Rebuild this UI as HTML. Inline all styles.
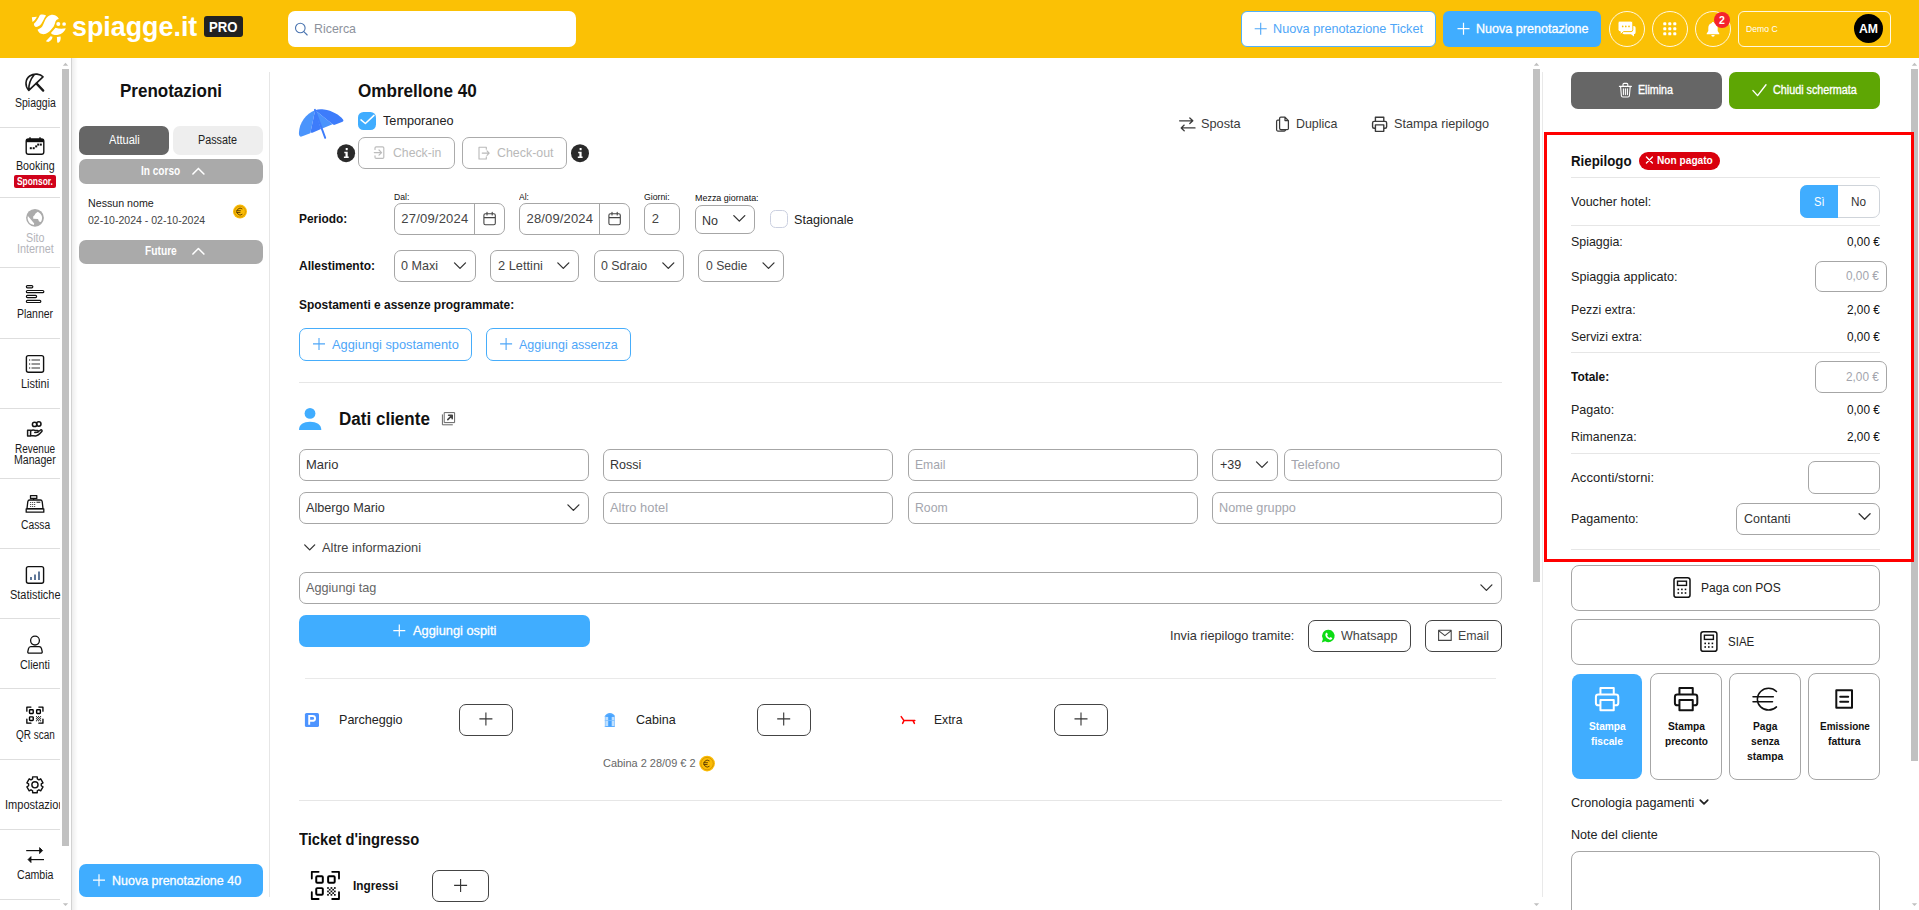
<!DOCTYPE html>
<html><head><meta charset="utf-8">
<style>
*{box-sizing:border-box;margin:0;padding:0}
html,body{width:1919px;height:910px;overflow:hidden;background:#fff}
body{font-family:"Liberation Sans",sans-serif;font-size:13px;color:#222;position:relative}
.a{position:absolute}
.t{position:absolute;white-space:pre;line-height:1}
svg{position:absolute;overflow:visible}
</style></head><body>
<div class="a" style="left:0px;top:0px;width:1919px;height:58px;background:#fbc105;border-radius:0px;"></div>
<svg style="left:0;top:0" width="110" height="58" viewBox="0 0 110 58"><g fill="#fff">
<path d="M31.8 17.2 L36.9 16.8 C35.8 19 34.3 20.8 32.5 21.9 Z"/>
<path d="M39.9 15 C41.8 14.3 44 14.5 46.1 15.4 C44 18 43.3 21 41.2 23.9 C39.8 25.6 38 26.7 35.9 26.9 C34.6 26.5 33.8 25.2 33.9 23.7 C36.5 21.5 38.3 18.5 39.9 15 Z"/>
<path d="M50.9 14.9 C52.5 14.5 54.2 14.8 55.5 15.6 C57.2 16.5 58.3 17.7 58.8 19.1 C57.3 19.4 56.1 20.2 55.5 21.4 C55 23.2 54.6 24.8 53.7 26.5 L50 31.1 C48.8 32.3 47.4 33.3 45.85 33.85 C44.3 34.3 42.6 34.3 41.2 33.85 C39.5 33 38.2 31.5 37.5 29.7 C39.5 29 41.1 27.9 42.2 26.5 C43.6 24.3 44.3 21.8 45.4 19.5 C46.1 18.2 47 17.1 48.2 16.3 C49 15.7 49.9 15.2 50.9 14.9 Z"/>
<path d="M55.5 27.85 C58.8 28.9 62.3 29 65.7 28.3 C65.3 30 64.3 31.4 62.9 32.5 C61.6 33.6 60 34.4 58.3 34.8 C56.8 35.1 55.2 35.1 53.7 34.8 C52.6 34.4 51.6 33.8 50.9 32.9 Z"/>
<circle cx="58.3" cy="23.9" r="2.0"/><circle cx="64.1" cy="24" r="1.85"/>
<path d="M50.5 36.2 L52.5 36.85 C52.4 38.2 51.8 39.4 50.9 40.3 C50.1 41.1 49.2 41.7 48.2 41.9 L45.85 41.2 Z"/>
<path d="M56.9 37.1 L60.6 36.6 C60.8 38 60.7 39.5 60.2 40.8 C59.8 41.7 59.1 42.4 58.3 42.85 L57.2 42.6 Z"/>
</g></svg>
<div class="t" style="left:72.0px;top:12.37px;font-size:28.5px;font-weight:bold;color:#fff;transform:scaleX(0.9419);transform-origin:0 0;">spiagge.it</div>
<div class="a" style="left:204px;top:16px;width:39px;height:21px;background:#222;border-radius:3px;"></div>
<div class="t" style="left:209.0px;top:19.95px;font-size:14px;font-weight:bold;color:#fff;transform:scaleX(0.9359);transform-origin:0 0;">PRO</div>
<div class="a" style="left:288px;top:11px;width:288px;height:36px;background:#fff;border-radius:7px;"></div>
<svg style="left:0;top:0" width="1" height="1"><circle cx="300.3" cy="28" r="4.8" fill="none" stroke="#4a74b0" stroke-width="1.1"/><path d="M303.8 31.6 L307.2 35" stroke="#4a74b0" stroke-width="1.1" stroke-linecap="round"/></svg>
<div class="t" style="left:314.0px;top:22.00px;font-size:13px;color:#8d929c;transform:scaleX(0.9529);transform-origin:0 0;">Ricerca</div>
<div class="a" style="left:1241px;top:11px;width:195px;height:36px;border:1px solid #52b2fb;border-radius:6px;background:#fff;"></div>
<svg style="left:0;top:0" width="1" height="1"><path d="M1260.7 22.7V34.7M1254.7 28.7H1266.7" fill="none" stroke="#4ea6f8" stroke-width="1.1"/></svg>
<div class="t" style="left:1273.0px;top:22.20px;font-size:13px;color:#4ea6f8;transform:scaleX(0.9744);transform-origin:0 0;">Nuova prenotazione Ticket</div>
<div class="a" style="left:1443px;top:11px;width:158px;height:36px;background:#40adff;border-radius:6px;"></div>
<svg style="left:0;top:0" width="1" height="1"><path d="M1463.5 22.7V34.7M1457.5 28.7H1469.5" fill="none" stroke="#fff" stroke-width="1.2"/></svg>
<div class="t" style="left:1476.0px;top:22.20px;font-size:13px;color:#fff;transform:scaleX(0.9668);transform-origin:0 0;-webkit-text-stroke:0.3px #fff;">Nuova prenotazione</div>
<div class="a" style="left:1609px;top:11px;width:36px;height:36px;border:1px solid rgba(255,255,255,0.88);border-radius:50%"></div>
<div class="a" style="left:1651.8px;top:11px;width:36px;height:36px;border:1px solid rgba(255,255,255,0.88);border-radius:50%"></div>
<div class="a" style="left:1694.8px;top:11px;width:36px;height:36px;border:1px solid rgba(255,255,255,0.88);border-radius:50%"></div>
<svg style="left:0;top:0" width="1" height="1"><g><path fill="#fff" d="M1624 26 H1633.8 a1.8 1.8 0 0 1 1.8 1.8 V32.4 a1.8 1.8 0 0 1 -1.8 1.8 H1634 V36.600 L1631 34.200 H1624 a1.800 1.800 0 0 1 -1.800 -1.800 V27.800 a1.800 1.800 0 0 1 1.800 -1.800 Z"/><path fill="#fff" stroke="#fbc105" stroke-width="1" d="M1619.8 21.1 H1631 a1.8 1.8 0 0 1 1.8 1.8 V29.800 a1.800 1.800 0 0 1 -1.800 1.800 H1623.600 L1620.200 34.800 V31.600 H1619.800 a1.800 1.800 0 0 1 -1.800 -1.800 V22.900 a1.800 1.800 0 0 1 1.800 -1.800 Z"/><circle cx="1622.7" cy="26.4" r="0.85" fill="#fbc105"/><circle cx="1625.8" cy="26.4" r="0.85" fill="#fbc105"/><circle cx="1629" cy="26.4" r="0.85" fill="#fbc105"/></g></svg>
<svg style="left:0;top:0" width="1" height="1"><rect x="1663.3" y="22.3" width="3" height="3" rx="0.9" fill="#fff"/><rect x="1663.3" y="27.3" width="3" height="3" rx="0.9" fill="#fff"/><rect x="1663.3" y="32.3" width="3" height="3" rx="0.9" fill="#fff"/><rect x="1668.3" y="22.3" width="3" height="3" rx="0.9" fill="#fff"/><rect x="1668.3" y="27.3" width="3" height="3" rx="0.9" fill="#fff"/><rect x="1668.3" y="32.3" width="3" height="3" rx="0.9" fill="#fff"/><rect x="1673.3" y="22.3" width="3" height="3" rx="0.9" fill="#fff"/><rect x="1673.3" y="27.3" width="3" height="3" rx="0.9" fill="#fff"/><rect x="1673.3" y="32.3" width="3" height="3" rx="0.9" fill="#fff"/></svg>
<svg style="left:0;top:0" width="1" height="1"><g transform="translate(1706,21.5)"><path fill="#fff" d="M7 0.5 C7.7 0.5 8.2 1 8.2 1.6 C10.5 2.2 11.7 4.2 11.7 6.5 V9.5 L13.3 12 V12.8 H0.7 V12 L2.3 9.5 V6.5 C2.3 4.2 3.5 2.2 5.8 1.6 C5.8 1 6.3 0.5 7 0.5 Z M5.3 13.6 H8.7 A1.7 1.7 0 0 1 5.3 13.6 Z"/></g></svg>
<div class="a" style="left:1714px;top:12px;width:16px;height:16px;background:#f5222d;border-radius:9px;"></div>
<div class="t" style="left:1719.0px;top:14.71px;font-size:10.5px;font-weight:bold;color:#fff;">2</div>
<div class="a" style="left:1738px;top:11px;width:153px;height:36px;border:1px solid rgba(255,255,255,0.88);border-radius:6px;background:transparent;"></div>
<div class="t" style="left:1746.4px;top:24.36px;font-size:9.5px;color:#fff;transform:scaleX(0.9069);transform-origin:0 0;">Demo C</div>
<div class="a" style="left:1854px;top:14px;width:29px;height:29px;background:#000;border-radius:15px;"></div>
<div class="t" style="left:1859.2px;top:22.62px;font-size:12.5px;font-weight:bold;color:#fff;transform:scaleX(0.9767);transform-origin:0 0;">AM</div>
<div class="a" style="left:0px;top:127px;width:60px;height:1px;background:#dedede;border-radius:0px;"></div>
<div class="a" style="left:0px;top:197px;width:60px;height:1px;background:#dedede;border-radius:0px;"></div>
<div class="a" style="left:0px;top:267px;width:60px;height:1px;background:#dedede;border-radius:0px;"></div>
<div class="a" style="left:0px;top:338px;width:60px;height:1px;background:#dedede;border-radius:0px;"></div>
<div class="a" style="left:0px;top:408px;width:60px;height:1px;background:#dedede;border-radius:0px;"></div>
<div class="a" style="left:0px;top:478px;width:60px;height:1px;background:#dedede;border-radius:0px;"></div>
<div class="a" style="left:0px;top:548px;width:60px;height:1px;background:#dedede;border-radius:0px;"></div>
<div class="a" style="left:0px;top:618px;width:60px;height:1px;background:#dedede;border-radius:0px;"></div>
<div class="a" style="left:0px;top:688px;width:60px;height:1px;background:#dedede;border-radius:0px;"></div>
<div class="a" style="left:0px;top:759px;width:60px;height:1px;background:#dedede;border-radius:0px;"></div>
<div class="a" style="left:0px;top:829px;width:60px;height:1px;background:#dedede;border-radius:0px;"></div>
<div class="a" style="left:0px;top:899px;width:60px;height:1px;background:#dedede;border-radius:0px;"></div>
<div class="a" style="left:62px;top:69px;width:7px;height:777px;background:#c1c1c1;border-radius:0px;"></div>
<svg style="left:0;top:0" width="1" height="1"><path d="M62.8 65.8 L65.5 62.8 L68.2 65.8 Z" fill="#c0c0c0"/><path d="M62.8 903.3 L65.5 906 L68.2 903.3 Z" fill="#c0c0c0"/></svg>
<div class="a" style="left:70.5px;top:58px;width:1.0px;height:852px;background:#d2d2d2;border-radius:0px;"></div>
<div class="a" style="left:71.5px;top:58px;width:6px;height:852px;background:linear-gradient(to right,rgba(0,0,0,0.07),rgba(0,0,0,0))"></div>
<svg style="left:0;top:0" width="1" height="1"><path d="M28.8 90.4 C24.8 86.3 25 79.2 29.7 76 C34.2 73 40.3 73.8 43 76.8 Z M28.8 90.4 C28.5 85 30.5 79.2 34.2 74.8" fill="none" stroke="#1a1a1a" stroke-width="1.6" stroke-linecap="round" stroke-linejoin="round" /></svg>
<svg style="left:0;top:0" width="1" height="1"><path d="M36.6 83.6 L43.2 90.6" fill="none" stroke="#1a1a1a" stroke-width="2.3" stroke-linecap="round" stroke-linejoin="round" stroke-linecap="butt"/></svg>
<div class="t" style="left:14.8px;top:97.24px;font-size:12px;color:#1a1a1a;transform:scaleX(0.8733);transform-origin:0 0;">Spiaggia</div>
<svg style="left:0;top:0" width="1" height="1"><rect x="26.2" y="139" width="17.6" height="15.3" rx="2.2" fill="none" stroke="#111" stroke-width="1.4"/><rect x="26.2" y="139" width="17.6" height="3.2" fill="#111"/><path d="M30 137.3V139.5M40 137.3V139.5" stroke="#111" stroke-width="1.4"/><g fill="#111"><rect x="29.8" y="147.2" width="2" height="2"/><rect x="32.7" y="147.2" width="2" height="2"/><rect x="35.2" y="145.4" width="2" height="2"/><rect x="37.2" y="143.600" width="2" height="2"/><rect x="39.800" y="143.600" width="2" height="2"/></g></svg>
<div class="t" style="left:15.9px;top:159.64px;font-size:12px;color:#1a1a1a;transform:scaleX(0.8899);transform-origin:0 0;">Booking</div>
<div class="a" style="left:14px;top:175px;width:42px;height:13px;background:#d0021b;border-radius:2px;"></div>
<div class="t" style="left:17.3px;top:175.91px;font-size:10.5px;font-weight:bold;color:#fff;transform:scaleX(0.8000);transform-origin:0 0;">Sponsor.</div>
<svg style="left:0;top:0" width="1" height="1"><circle cx="35" cy="217.8" r="8.9" fill="#ababab"/><path d="M27.9 215.9 L30.9 219.5 L34.2 223.4 L33.85 224.9 C32.800 224.900 31.800 224.600 30.900 224.100 C29.900 223.500 29.100 222.600 28.600 221.500 C28.100 220.600 27.800 219.600 27.600 218.500 C27.600 217.600 27.700 216.700 27.900 215.900 Z" fill="#fff"/><path d="M37.800 211.700 L35.500 213.550 L34.500 215.200 L33.200 216.500 V218.800 L38 219 L39 221.600 L40.900 222 C41.700 220.800 42.100 219.400 42.100 217.800 C42.100 216.400 41.500 215 40.400 213.700 C39.700 212.900 38.800 212.200 37.800 211.700 Z" fill="#fff"/></svg>
<div class="t" style="left:25.9px;top:232.14px;font-size:12px;color:#b4b4ba;transform:scaleX(0.8943);transform-origin:0 0;">Sito</div>
<div class="t" style="left:16.7px;top:242.64px;font-size:12px;color:#b4b4ba;transform:scaleX(0.9041);transform-origin:0 0;">Internet</div>
<svg style="left:0;top:0" width="1" height="1"><g fill="none" stroke="#111" stroke-width="1.2"><rect x="26.4" y="285.6" width="6.4" height="2.2" rx="1"/><rect x="26.4" y="290.5" width="17.4" height="2.2" rx="1"/><rect x="26.4" y="295.4" width="10.2" height="2.2" rx="1"/><rect x="26.4" y="300.3" width="14.4" height="2.2" rx="1"/></g></svg>
<div class="t" style="left:17.2px;top:307.54px;font-size:12px;color:#1a1a1a;transform:scaleX(0.8701);transform-origin:0 0;">Planner</div>
<svg style="left:0;top:0" width="1" height="1"><rect x="26.4" y="355.6" width="17.2" height="16.6" rx="2" fill="none" stroke="#111" stroke-width="1.4"/><path d="M31.5 360H40M31.5 364H40M31.5 368H40" stroke="#333" stroke-width="1.1"/><g fill="#333"><rect x="29" y="359.4" width="1.2" height="1.2"/><rect x="29" y="363.4" width="1.2" height="1.2"/><rect x="29" y="367.4" width="1.2" height="1.2"/></g></svg>
<div class="t" style="left:21.2px;top:377.54px;font-size:12px;color:#1a1a1a;transform:scaleX(0.9157);transform-origin:0 0;">Listini</div>
<svg style="left:0;top:0" width="1" height="1"><path d="M27.6 430.2 H30.6 V436 H27.6 Z M30.6 431 C32 429.8 34 429.8 35.4 430.6 L37.6 430.6 C38.6 430.6 38.8 432.2 37.6 432.3 L34.8 432.4 M37.9 431.8 L40.6 430 C41.6 429.4 42.6 430.6 41.8 431.5 C40.2 433.4 38 435.8 35.6 435.9 L30.6 435.4" fill="none" stroke="#1a1a1a" stroke-width="1.5" stroke-linecap="round" stroke-linejoin="round" /></svg>
<svg style="left:0;top:0" width="1" height="1"><circle cx="34.6" cy="424.4" r="2.2" fill="none" stroke="#111" stroke-width="1.5"/><circle cx="38.8" cy="424" r="2.2" fill="none" stroke="#111" stroke-width="1.5"/></svg>
<div class="t" style="left:15.1px;top:443.34px;font-size:12px;color:#1a1a1a;transform:scaleX(0.8325);transform-origin:0 0;">Revenue</div>
<div class="t" style="left:14.4px;top:454.24px;font-size:12px;color:#1a1a1a;transform:scaleX(0.8823);transform-origin:0 0;">Manager</div>
<svg style="left:0;top:0" width="1" height="1"><g fill="none" stroke="#111" stroke-width="1.3" stroke-linejoin="round"><path d="M30.5 495.6 H36.8 V498.4 H30.5 Z"/><path d="M33.6 498.4 V500"/><path d="M29.6 500 H40.4 C41.4 500 42 500.6 42.2 501.6 L43 508.6 H27 L27.8 501.6 C28 500.6 28.6 500 29.6 500 Z"/><path d="M26.2 508.8 H43.8 V512.2 H26.2 Z"/></g><path d="M36.5 502.3H40.3" stroke="#555" stroke-width="1.4"/><g fill="#555"><rect x="30" y="502" width="1.2" height="1"/><rect x="32" y="502" width="1.2" height="1"/><rect x="34" y="502" width="1.2" height="1"/><rect x="30" y="504" width="1.2" height="1"/><rect x="32" y="504" width="1.2" height="1"/><rect x="34" y="504" width="1.2" height="1"/><rect x="30" y="506" width="1.2" height="1"/><rect x="32" y="506" width="1.2" height="1"/><rect x="34" y="506" width="1.2" height="1"/></g></svg>
<div class="t" style="left:20.9px;top:518.64px;font-size:12px;color:#1a1a1a;transform:scaleX(0.8584);transform-origin:0 0;">Cassa</div>
<svg style="left:0;top:0" width="1" height="1"><rect x="26.4" y="566.6" width="17.2" height="16.6" rx="2" fill="none" stroke="#111" stroke-width="1.4"/><path d="M31 580V577M35 580V574.5M39 580V571.5" stroke="#1d3f6e" stroke-width="1.4"/></svg>
<div class="t" style="left:9.7px;top:588.64px;font-size:12px;color:#1a1a1a;transform:scaleX(0.9122);transform-origin:0 0;">Statistiche</div>
<svg style="left:0;top:0" width="1" height="1"><circle cx="35" cy="640.6" r="4.4" fill="none" stroke="#111" stroke-width="1.3"/><path d="M30.8 646.6 H39.2 C40.4 646.6 41.2 647.4 41.5 648.6 L42.2 651.6 C42.4 652.6 41.8 653.2 41 653.2 H29 C28.2 653.2 27.6 652.6 27.800 651.6 L28.5 648.6 C28.800 647.4 29.600 646.6 30.800 646.6 Z" fill="none" stroke="#111" stroke-width="1.3"/></svg>
<div class="t" style="left:20.2px;top:658.84px;font-size:12px;color:#1a1a1a;transform:scaleX(0.8963);transform-origin:0 0;">Clienti</div>
<svg style="left:0;top:0" width="1" height="1"><path d="M26.849999999999998 711.139V707.05H30.938999999999997 M38.861 707.05H42.949999999999996V711.139 M42.949999999999996 719.0609999999999V723.15H38.861 M30.938999999999997 723.15H26.849999999999998V719.0609999999999" fill="none" stroke="#000" stroke-width="1.3" stroke-linecap="round" stroke-linejoin="round"/><rect x="29.52" y="709.73" width="3.70" height="3.70" rx="0.72" fill="none" stroke="#000" stroke-width="1.43"/><rect x="36.66" y="709.73" width="3.70" height="3.70" rx="0.72" fill="none" stroke="#000" stroke-width="1.43"/><rect x="29.52" y="716.86" width="3.70" height="3.70" rx="0.72" fill="none" stroke="#000" stroke-width="1.43"/><rect x="35.94" y="716.14" width="1.03" height="1.03" fill="#111"/><rect x="35.94" y="718.20" width="1.03" height="1.03" fill="#111"/><rect x="35.94" y="720.25" width="1.03" height="1.03" fill="#111"/><rect x="36.97" y="717.17" width="1.03" height="1.03" fill="#111"/><rect x="36.97" y="719.22" width="1.03" height="1.03" fill="#111"/><rect x="38.00" y="716.14" width="1.03" height="1.03" fill="#111"/><rect x="38.00" y="718.20" width="1.03" height="1.03" fill="#111"/><rect x="38.00" y="720.25" width="1.03" height="1.03" fill="#111"/><rect x="39.02" y="717.17" width="1.03" height="1.03" fill="#111"/><rect x="39.02" y="719.22" width="1.03" height="1.03" fill="#111"/><rect x="40.05" y="716.14" width="1.03" height="1.03" fill="#111"/><rect x="40.05" y="718.20" width="1.03" height="1.03" fill="#111"/><rect x="40.05" y="720.25" width="1.03" height="1.03" fill="#111"/></svg>
<div class="t" style="left:15.9px;top:728.64px;font-size:12px;color:#1a1a1a;transform:scaleX(0.8311);transform-origin:0 0;">QR scan</div>
<svg style="left:0;top:0" width="1" height="1"><path d="M32.63 776.83 L37.27 776.83 L37.31 778.85 L38.93 779.78 L40.69 778.81 L43.01 782.82 L41.28 783.87 L41.28 785.73 L43.01 786.78 L40.69 790.79 L38.93 789.82 L37.31 790.75 L37.27 792.77 L32.63 792.77 L32.59 790.75 L30.97 789.82 L29.21 790.79 L26.89 786.78 L28.62 785.73 L28.62 783.87 L26.89 782.82 L29.21 778.81 L30.97 779.78 L32.59 778.85 Z" fill="none" stroke="#111" stroke-width="1.4" stroke-linejoin="round"/><circle cx="34.95" cy="784.8" r="3.1" fill="none" stroke="#111" stroke-width="1.4"/></svg>
<div class="a" style="left:0;top:795px;width:60px;height:20px;overflow:hidden">
<div class="t" style="left:4.5px;top:3.84px;font-size:12px;color:#1a1a1a;transform:scaleX(0.9202);transform-origin:0 0;">Impostazioni</div>
</div>
<svg style="left:0;top:0" width="1" height="1"><path d="M26.2 850.6H41" stroke="#111" stroke-width="1.2"/><path d="M39.6 847.6 L42.6 850.6 L39.6 853.6 Z" fill="#111" stroke="#111" stroke-width="0.8" stroke-linejoin="round"/><path d="M29.5 859.6H44" stroke="#111" stroke-width="1.2"/><path d="M31 856.6 L28 859.6 L31 862.6 Z" fill="#111" stroke="#111" stroke-width="0.8" stroke-linejoin="round"/></svg>
<div class="t" style="left:17.1px;top:869.24px;font-size:12px;color:#1a1a1a;transform:scaleX(0.8825);transform-origin:0 0;">Cambia</div>
<div class="t" style="left:120.3px;top:81.56px;font-size:18px;font-weight:bold;color:#111;transform:scaleX(0.9443);transform-origin:0 0;">Prenotazioni</div>
<div class="a" style="left:79px;top:126px;width:90px;height:29px;background:#666;border-radius:7px;"></div>
<div class="t" style="left:109.0px;top:134.04px;font-size:12px;color:#fff;transform:scaleX(0.9233);transform-origin:0 0;">Attuali</div>
<div class="a" style="left:173px;top:126px;width:90px;height:29px;background:#eeeeee;border-radius:7px;"></div>
<div class="t" style="left:198.4px;top:134.04px;font-size:12px;color:#222;transform:scaleX(0.8995);transform-origin:0 0;">Passate</div>
<div class="a" style="left:79px;top:159px;width:184px;height:25px;background:#aaaaaa;border-radius:7px;"></div>
<div class="t" style="left:141.4px;top:164.64px;font-size:12px;font-weight:bold;color:#fff;transform:scaleX(0.8396);transform-origin:0 0;">In corso</div>
<svg style="left:0;top:0" width="1" height="1"><path d="M192.9 173.95 L198.4 168.45 L203.9 173.95" fill="none" stroke="#fff" stroke-width="1.6" stroke-linecap="round" stroke-linejoin="round"/></svg>
<div class="t" style="left:87.7px;top:197.69px;font-size:11px;color:#222;transform:scaleX(0.9694);transform-origin:0 0;">Nessun nome</div>
<div class="t" style="left:87.7px;top:215.49px;font-size:11px;color:#444;transform:scaleX(0.9574);transform-origin:0 0;">02-10-2024 - 02-10-2024</div>
<svg style="left:0;top:0" width="1" height="1"><circle cx="240" cy="211.6" r="7" fill="#fbbc05"/><circle cx="240" cy="211.6" r="5.4" fill="none" stroke="#c98a00" stroke-width="0.7"/><path d="M242.4 209.0 A3.4 3.4 0 1 0 242.4 214.2 M236.4 210.7H240.8 M236.4 212.5H240.4" fill="none" stroke="#5a3b00" stroke-width="0.9"/></svg>
<div class="a" style="left:79px;top:240px;width:184px;height:24px;background:#aaaaaa;border-radius:7px;"></div>
<div class="t" style="left:145.4px;top:245.04px;font-size:12px;font-weight:bold;color:#fff;transform:scaleX(0.8515);transform-origin:0 0;">Future</div>
<svg style="left:0;top:0" width="1" height="1"><path d="M192.9 254.05 L198.4 248.55 L203.9 254.05" fill="none" stroke="#fff" stroke-width="1.6" stroke-linecap="round" stroke-linejoin="round"/></svg>
<div class="a" style="left:269px;top:72px;width:1px;height:825px;background:#e6e6e6;border-radius:0px;"></div>
<div class="a" style="left:79px;top:864px;width:184px;height:33px;background:#40adff;border-radius:7px;"></div>
<svg style="left:0;top:0" width="1" height="1"><path d="M99 874.2V886.2M93.0 880.2H105.0" fill="none" stroke="#fff" stroke-width="1.2"/></svg>
<div class="t" style="left:112.4px;top:873.80px;font-size:13px;color:#fff;transform:scaleX(0.9603);transform-origin:0 0;-webkit-text-stroke:0.3px #fff;">Nuova prenotazione 40</div>
<div class="t" style="left:358.4px;top:81.56px;font-size:18px;font-weight:bold;color:#111;transform:scaleX(0.9500);transform-origin:0 0;">Ombrellone 40</div>
<svg style="left:0;top:0" width="1" height="1"><g>
<path d="M315.1 110.2 C306 113.5 299.2 122.5 298.9 133.2 C298.9 135.6 300 137 301.6 136.6 L310.3 133.2 Z" fill="#4a94fc"/>
<path d="M315.1 110.2 L310.3 133.2 C310.4 131.8 311.3 133.2 312.4 132.8 L321 129 Z" fill="#3d7cfb"/>
<path d="M315.1 110.2 L321 129 L332 124.6 C332.600 124.300 332.400 123.800 332 123.800 Z" fill="#4a94fc"/>
<path d="M315.1 110.2 C318 109.200 321 109.200 324 109.600 C332 110.700 339.500 114.800 343.200 119.800 C343.700 120.800 343.300 121.400 342.600 121.700 L334.800 124.800 C333.800 125.100 333 124.800 332 123.800 Z" fill="#3d7cfb"/>
<path d="M314.9 109.8 L325.2 137.8" stroke="#3d7cfb" stroke-width="1.9" stroke-linecap="round"/>
</g></svg>
<div class="a" style="left:358px;top:112px;width:18px;height:18px;background:#40adff;border-radius:5.5px;"></div>
<svg style="left:0;top:0" width="1" height="1"><path d="M361 119.900 L365.400 123.500 L374 115.400" fill="none" stroke="#fff" stroke-width="1.5" stroke-linecap="round" stroke-linejoin="round" /></svg>
<div class="t" style="left:382.7px;top:113.80px;font-size:13px;color:#222;transform:scaleX(0.9754);transform-origin:0 0;">Temporaneo</div>
<svg style="left:0;top:0" width="1" height="1"><circle cx="346.1" cy="153.2" r="9" fill="#2a2a2a"/><rect x="345.70000000000005" y="148.0" width="2" height="2.2" fill="#fff"/><path d="M344.3 151.79999999999998H347.70000000000005V156.6H348.70000000000005V158.1H343.90000000000003V156.6H345.5V153.29999999999998H344.3Z" fill="#fff"/></svg>
<svg style="left:0;top:0" width="1" height="1"><circle cx="580" cy="153.2" r="9" fill="#2a2a2a"/><rect x="579.6" y="148.0" width="2" height="2.2" fill="#fff"/><path d="M578.2 151.79999999999998H581.6V156.6H582.6V158.1H577.8V156.6H579.4V153.29999999999998H578.2Z" fill="#fff"/></svg>
<div class="a" style="left:358px;top:137px;width:97px;height:32px;border:1px solid #ababab;border-radius:7px;background:#fff;"></div>
<div class="a" style="left:462px;top:137px;width:105px;height:32px;border:1px solid #ababab;border-radius:7px;background:#fff;"></div>
<svg style="left:0;top:0" width="1" height="1"><path d="M375 149.4 V148 C375 147.200 375.500 146.800 376.200 146.800 H382.600 C383.400 146.800 383.800 147.300 383.800 148 V157.200 C383.800 158 383.400 158.400 382.600 158.400 H376.200 C375.500 158.400 375 158 375 157.200 V155.800 M374.300 152.600 H381.400 M379 150 L381.600 152.600 L379 155.200" fill="none" stroke="#bdbdbd" stroke-width="1.2" stroke-linecap="round" stroke-linejoin="round" /></svg>
<div class="t" style="left:393.2px;top:146.40px;font-size:13px;color:#b9b9b9;transform:scaleX(0.9416);transform-origin:0 0;">Check-in</div>
<svg style="left:0;top:0" width="1" height="1"><path d="M486.3 149.3 V147.2 H479 V159 H486.3 V156.9 M482.2 153.1 H489 M487 150.8 L489.2 153.1 L487 155.4" fill="none" stroke="#b9b9b9" stroke-width="1.1" stroke-linecap="round" stroke-linejoin="round" /></svg>
<div class="t" style="left:497.3px;top:146.40px;font-size:13px;color:#b9b9b9;transform:scaleX(0.9536);transform-origin:0 0;">Check-out</div>
<svg style="left:0;top:0" width="1" height="1"><path d="M1179.6 120.8 H1192.4 M1189.8 118 L1192.8 120.8 L1189.8 123.600 M1195 127.900 H1181.600 M1184.200 125.100 L1181.200 127.900 L1184.200 130.700" fill="none" stroke="#3a3a3a" stroke-width="1.3" stroke-linecap="round" stroke-linejoin="round" /></svg>
<div class="t" style="left:1200.6px;top:116.80px;font-size:13px;color:#3a3a3a;transform:scaleX(0.9782);transform-origin:0 0;">Sposta</div>
<svg style="left:0;top:0" width="1" height="1"><path d="M1279.6 120.2 V128.2 C1279.6 129 1280.2 129.600 1281 129.600 H1285.600 M1279.600 120.200 H1277.800 C1277 120.200 1276.600 120.800 1276.600 121.400 V129.800 C1276.600 130.600 1277.200 131 1277.800 131 H1284.400 C1285.200 131 1285.600 130.400 1285.600 129.800 V129.600 M1279.600 120.200 V118.400 C1279.600 117.800 1280.200 117.200 1280.800 117.200 H1285 L1288.400 120.600 V128.400 C1288.400 129 1287.800 129.600 1287.200 129.600 H1285.600 M1285 117.200 V120.600 H1288.400" fill="none" stroke="#3a3a3a" stroke-width="1.25" stroke-linecap="round" stroke-linejoin="round" /></svg>
<div class="t" style="left:1296.2px;top:116.80px;font-size:13px;color:#3a3a3a;transform:scaleX(0.9548);transform-origin:0 0;">Duplica</div>
<svg style="left:0;top:0" width="1" height="1"><path d="M1375.42 121.36 V117.27499999999999 H1383.78 V121.36 M1375.42 128.2 H1374.09 C1373.14 128.2 1372.57 127.63 1372.57 126.67999999999999 V122.88 C1372.57 121.92999999999999 1373.14 121.36 1374.09 121.36 H1385.11 C1386.06 121.36 1386.63 121.92999999999999 1386.63 122.88 V126.67999999999999 C1386.63 127.63 1386.06 128.2 1385.11 128.2 H1383.78 M1375.42 124.875 H1383.78 V131.335 H1375.42 Z" fill="none" stroke="#3a3a3a" stroke-width="1.4" stroke-linecap="round" stroke-linejoin="round" /></svg>
<div class="t" style="left:1393.6px;top:116.80px;font-size:13px;color:#3a3a3a;transform:scaleX(0.9748);transform-origin:0 0;">Stampa riepilogo</div>
<div class="t" style="left:298.7px;top:212.20px;font-size:13px;font-weight:bold;color:#111;transform:scaleX(0.9140);transform-origin:0 0;">Periodo:</div>
<div class="t" style="left:394.3px;top:193.18px;font-size:9px;color:#111;transform:scaleX(0.9553);transform-origin:0 0;">Dal:</div>
<div class="a" style="left:394px;top:203px;width:111px;height:32px;border:1px solid #a6a6a6;border-radius:7px;background:#fff;"></div>
<div class="a" style="left:474px;top:204px;width:1px;height:30px;background:#a6a6a6;border-radius:0px;"></div>
<div class="t" style="left:401.3px;top:212.20px;font-size:13px;color:#444;letter-spacing:0.202px;">27/09/2024</div>
<svg style="left:0;top:0" width="1" height="1"><path d="M485.40000000000003 213.8 H493.8 C494.7 213.8 495.3 214.4 495.3 215.3 V223.2 C495.3 224.1 494.7 224.7 493.8 224.7 H485.40000000000003 C484.5 224.7 483.90000000000003 224.1 483.90000000000003 223.2 V215.3 C483.90000000000003 214.4 484.5 213.8 485.40000000000003 213.8 Z M483.90000000000003 217.6 H495.3 M487.0 212.2 V215 M492.2 212.2 V215" fill="none" stroke="#444" stroke-width="1.1" stroke-linecap="round" stroke-linejoin="round" /></svg>
<div class="t" style="left:519.2px;top:193.18px;font-size:9px;color:#111;transform:scaleX(0.9510);transform-origin:0 0;">Al:</div>
<div class="a" style="left:519px;top:203px;width:111px;height:32px;border:1px solid #a6a6a6;border-radius:7px;background:#fff;"></div>
<div class="a" style="left:599px;top:204px;width:1px;height:30px;background:#a6a6a6;border-radius:0px;"></div>
<div class="t" style="left:526.6px;top:212.20px;font-size:13px;color:#444;letter-spacing:0.147px;">28/09/2024</div>
<svg style="left:0;top:0" width="1" height="1"><path d="M610.4 213.8 H618.8 C619.6999999999999 213.8 620.3 214.4 620.3 215.3 V223.2 C620.3 224.1 619.6999999999999 224.7 618.8 224.7 H610.4 C609.5 224.7 608.9 224.1 608.9 223.2 V215.3 C608.9 214.4 609.5 213.8 610.4 213.8 Z M608.9 217.6 H620.3 M612.0 212.2 V215 M617.1999999999999 212.2 V215" fill="none" stroke="#444" stroke-width="1.1" stroke-linecap="round" stroke-linejoin="round" /></svg>
<div class="t" style="left:644.4px;top:192.98px;font-size:9px;color:#111;transform:scaleX(0.9655);transform-origin:0 0;">Giorni:</div>
<div class="a" style="left:644px;top:203px;width:36px;height:32px;border:1px solid #a6a6a6;border-radius:7px;background:#fff;"></div>
<div class="t" style="left:651.7px;top:212.20px;font-size:13px;color:#444;">2</div>
<div class="t" style="left:695.0px;top:193.58px;font-size:9px;color:#111;transform:scaleX(0.9930);transform-origin:0 0;">Mezza giornata:</div>
<div class="a" style="left:695px;top:205px;width:60px;height:29px;border:1px solid #a6a6a6;border-radius:7px;background:#fff;"></div>
<div class="t" style="left:702.0px;top:214.20px;font-size:13px;color:#333;transform:scaleX(0.9624);transform-origin:0 0;">No</div>
<svg style="left:0;top:0" width="1" height="1"><path d="M733.8 215.65 L739.3 221.15 L744.8 215.65" fill="none" stroke="#333" stroke-width="1.3" stroke-linecap="round" stroke-linejoin="round"/></svg>
<div class="a" style="left:770px;top:210px;width:18px;height:18px;border:1px solid #cbd0e0;border-radius:5.5px;background:#fff;"></div>
<div class="t" style="left:793.8px;top:213.40px;font-size:13px;color:#222;transform:scaleX(0.9698);transform-origin:0 0;">Stagionale</div>
<div class="t" style="left:298.7px;top:259.00px;font-size:13px;font-weight:bold;color:#111;transform:scaleX(0.9230);transform-origin:0 0;">Allestimento:</div>
<div class="a" style="left:394px;top:250px;width:82px;height:32px;border:1px solid #a6a6a6;border-radius:7px;background:#fff;"></div>
<div class="t" style="left:401.3px;top:259.00px;font-size:13px;color:#444;transform:scaleX(0.9687);transform-origin:0 0;">0 Maxi</div>
<svg style="left:0;top:0" width="1" height="1"><path d="M454.5 262.85 L460 268.35 L465.5 262.85" fill="none" stroke="#333" stroke-width="1.3" stroke-linecap="round" stroke-linejoin="round"/></svg>
<div class="a" style="left:490px;top:250px;width:89px;height:32px;border:1px solid #a6a6a6;border-radius:7px;background:#fff;"></div>
<div class="t" style="left:497.5px;top:259.00px;font-size:13px;color:#444;transform:scaleX(0.9858);transform-origin:0 0;">2 Lettini</div>
<svg style="left:0;top:0" width="1" height="1"><path d="M557.8 262.85 L563.3 268.35 L568.8 262.85" fill="none" stroke="#333" stroke-width="1.3" stroke-linecap="round" stroke-linejoin="round"/></svg>
<div class="a" style="left:594px;top:250px;width:90px;height:32px;border:1px solid #a6a6a6;border-radius:7px;background:#fff;"></div>
<div class="t" style="left:601.0px;top:259.00px;font-size:13px;color:#444;transform:scaleX(0.9541);transform-origin:0 0;">0 Sdraio</div>
<svg style="left:0;top:0" width="1" height="1"><path d="M662.8 262.85 L668.3 268.35 L673.8 262.85" fill="none" stroke="#333" stroke-width="1.3" stroke-linecap="round" stroke-linejoin="round"/></svg>
<div class="a" style="left:698px;top:250px;width:86px;height:32px;border:1px solid #a6a6a6;border-radius:7px;background:#fff;"></div>
<div class="t" style="left:705.9px;top:259.00px;font-size:13px;color:#444;transform:scaleX(0.9366);transform-origin:0 0;">0 Sedie</div>
<svg style="left:0;top:0" width="1" height="1"><path d="M763.0 262.85 L768.5 268.35 L774.0 262.85" fill="none" stroke="#333" stroke-width="1.3" stroke-linecap="round" stroke-linejoin="round"/></svg>
<div class="t" style="left:298.8px;top:298.20px;font-size:13px;font-weight:bold;color:#111;transform:scaleX(0.9194);transform-origin:0 0;">Spostamenti e assenze programmate:</div>
<div class="a" style="left:299px;top:328px;width:173px;height:33px;border:1px solid #46adfb;border-radius:7px;background:#fff;"></div>
<svg style="left:0;top:0" width="1" height="1"><path d="M319 337.9V349.9M313.0 343.9H325.0" fill="none" stroke="#4ea6f8" stroke-width="1.1"/></svg>
<div class="t" style="left:331.7px;top:337.70px;font-size:13px;color:#4ea6f8;transform:scaleX(0.9856);transform-origin:0 0;">Aggiungi spostamento</div>
<div class="a" style="left:486px;top:328px;width:145px;height:33px;border:1px solid #46adfb;border-radius:7px;background:#fff;"></div>
<svg style="left:0;top:0" width="1" height="1"><path d="M506.1 337.9V349.9M500.1 343.9H512.1" fill="none" stroke="#4ea6f8" stroke-width="1.1"/></svg>
<div class="t" style="left:519.1px;top:337.70px;font-size:13px;color:#4ea6f8;transform:scaleX(0.9616);transform-origin:0 0;">Aggiungi assenza</div>
<div class="a" style="left:299px;top:382px;width:1203px;height:1px;background:#e6e6e6;border-radius:0px;"></div>
<svg style="left:0;top:0" width="1" height="1"><circle cx="310" cy="413.4" r="5.4" fill="#40adff"/><path d="M299 430 C299 424.500 303.500 421.800 310 421.800 C316.500 421.800 321.300 424.500 321.300 430 Z" fill="#40adff"/></svg>
<div class="t" style="left:338.6px;top:409.96px;font-size:18px;font-weight:bold;color:#111;transform:scaleX(0.9466);transform-origin:0 0;">Dati cliente</div>
<svg style="left:0;top:0" width="1" height="1"><path d="M444.6 412.6 H454.6 V422.6 H444.6 Z M442.4 414.8 V424.8 H452.4" fill="none" stroke="#666" stroke-width="1.0" stroke-linecap="round" stroke-linejoin="round" /></svg>
<svg style="left:0;top:0" width="1" height="1"><path d="M447.8 419.6 L452 415.400 M448.600 415.200 H452.200 V418.800" fill="none" stroke="#444" stroke-width="1.6" stroke-linecap="round" stroke-linejoin="round" /></svg>
<div class="a" style="left:299px;top:449px;width:290px;height:32px;border:1px solid #a6a6a6;border-radius:7px;background:#fff;"></div>
<div class="t" style="left:306.4px;top:458.00px;font-size:13px;color:#333;transform:scaleX(0.9964);transform-origin:0 0;">Mario</div>
<div class="a" style="left:603px;top:449px;width:290px;height:32px;border:1px solid #a6a6a6;border-radius:7px;background:#fff;"></div>
<div class="t" style="left:610.4px;top:458.00px;font-size:13px;color:#333;transform:scaleX(0.9626);transform-origin:0 0;">Rossi</div>
<div class="a" style="left:908px;top:449px;width:290px;height:32px;border:1px solid #a6a6a6;border-radius:7px;background:#fff;"></div>
<div class="t" style="left:915.4px;top:458.00px;font-size:13px;color:#a3a5ad;transform:scaleX(0.9349);transform-origin:0 0;">Email</div>
<div class="a" style="left:1212px;top:449px;width:66px;height:32px;border:1px solid #a6a6a6;border-radius:7px;background:#fff;"></div>
<div class="t" style="left:1219.5px;top:458.00px;font-size:13px;color:#333;transform:scaleX(0.9654);transform-origin:0 0;">+39</div>
<svg style="left:0;top:0" width="1" height="1"><path d="M1256.5 461.85 L1262 467.35 L1267.5 461.85" fill="none" stroke="#333" stroke-width="1.3" stroke-linecap="round" stroke-linejoin="round"/></svg>
<div class="a" style="left:1284px;top:449px;width:218px;height:32px;border:1px solid #a6a6a6;border-radius:7px;background:#fff;"></div>
<div class="t" style="left:1291.4px;top:458.00px;font-size:13px;color:#a3a5ad;transform:scaleX(0.9989);transform-origin:0 0;">Telefono</div>
<div class="a" style="left:299px;top:492px;width:290px;height:32px;border:1px solid #a6a6a6;border-radius:7px;background:#fff;"></div>
<div class="t" style="left:306.4px;top:501.00px;font-size:13px;color:#333;transform:scaleX(0.9736);transform-origin:0 0;">Albergo Mario</div>
<svg style="left:0;top:0" width="1" height="1"><path d="M567.9 504.85 L573.4 510.35 L578.9 504.85" fill="none" stroke="#333" stroke-width="1.3" stroke-linecap="round" stroke-linejoin="round"/></svg>
<div class="a" style="left:603px;top:492px;width:290px;height:32px;border:1px solid #a6a6a6;border-radius:7px;background:#fff;"></div>
<div class="t" style="left:610.4px;top:501.00px;font-size:13px;color:#a3a5ad;transform:scaleX(0.9907);transform-origin:0 0;">Altro hotel</div>
<div class="a" style="left:908px;top:492px;width:290px;height:32px;border:1px solid #a6a6a6;border-radius:7px;background:#fff;"></div>
<div class="t" style="left:915.4px;top:501.00px;font-size:13px;color:#a3a5ad;transform:scaleX(0.9427);transform-origin:0 0;">Room</div>
<div class="a" style="left:1212px;top:492px;width:290px;height:32px;border:1px solid #a6a6a6;border-radius:7px;background:#fff;"></div>
<div class="t" style="left:1219.4px;top:501.00px;font-size:13px;color:#a3a5ad;transform:scaleX(0.9749);transform-origin:0 0;">Nome gruppo</div>
<svg style="left:0;top:0" width="1" height="1"><path d="M304.7 544.9 L309.7 549.9 L314.7 544.9" fill="none" stroke="#333" stroke-width="1.3" stroke-linecap="round" stroke-linejoin="round"/></svg>
<div class="t" style="left:322.2px;top:541.00px;font-size:13px;color:#444;transform:scaleX(0.9857);transform-origin:0 0;">Altre informazioni</div>
<div class="a" style="left:299px;top:572px;width:1203px;height:32px;border:1px solid #a6a6a6;border-radius:7px;background:#fff;"></div>
<div class="t" style="left:306.4px;top:581.00px;font-size:13px;color:#666;transform:scaleX(0.9740);transform-origin:0 0;">Aggiungi tag</div>
<svg style="left:0;top:0" width="1" height="1"><path d="M1480.9 584.85 L1486.4 590.35 L1491.9 584.85" fill="none" stroke="#333" stroke-width="1.3" stroke-linecap="round" stroke-linejoin="round"/></svg>
<div class="a" style="left:299px;top:615px;width:291px;height:32px;background:#40adff;border-radius:7px;"></div>
<svg style="left:0;top:0" width="1" height="1"><path d="M399.3 624.6V636.6M393.3 630.6H405.3" fill="none" stroke="#fff" stroke-width="1.2"/></svg>
<div class="t" style="left:412.5px;top:623.80px;font-size:13px;color:#fff;transform:scaleX(0.9851);transform-origin:0 0;-webkit-text-stroke:0.3px #fff;">Aggiungi ospiti</div>
<div class="t" style="left:1169.5px;top:629.20px;font-size:13px;color:#333;transform:scaleX(0.9774);transform-origin:0 0;">Invia riepilogo tramite:</div>
<div class="a" style="left:1308px;top:620px;width:103px;height:32px;border:1px solid #444;border-radius:7px;background:#fff;"></div>
<svg style="left:0;top:0" width="1" height="1"><path d="M1328.4 629.8 A6.2 6.2 0 1 1 1325.200 641.300 L1321.800 642.400 L1322.900 639.100 A6.200 6.200 0 0 1 1328.400 629.800 Z" fill="#0cdc14"/><path d="M1326 633 C1326.400 632.600 1327 632.600 1327.200 633.100 L1327.700 634.300 C1327.800 634.600 1327.700 634.900 1327.500 635.100 L1327.100 635.500 C1327.600 636.600 1328.400 637.400 1329.500 637.900 L1329.900 637.500 C1330.100 637.300 1330.400 637.200 1330.700 637.300 L1331.900 637.800 C1332.400 638 1332.400 638.600 1332 639 C1331.300 639.700 1330.300 639.800 1329.300 639.400 C1327.400 638.700 1325.800 637.100 1325.400 635.400 C1325.200 634.400 1325.400 633.600 1326 633 Z" fill="#fff"/></svg>
<div class="t" style="left:1340.6px;top:629.20px;font-size:13px;color:#444;transform:scaleX(0.9667);transform-origin:0 0;">Whatsapp</div>
<div class="a" style="left:1425px;top:620px;width:77px;height:32px;border:1px solid #444;border-radius:7px;background:#fff;"></div>
<svg style="left:0;top:0" width="1" height="1"><path d="M1438.6 630.2 H1451.2 V640.4 H1438.6 Z M1438.600 630.600 L1444.900 635.600 L1451.200 630.600" fill="none" stroke="#444" stroke-width="1.1" stroke-linecap="round" stroke-linejoin="round" /></svg>
<div class="t" style="left:1457.7px;top:629.20px;font-size:13px;color:#444;transform:scaleX(0.9503);transform-origin:0 0;">Email</div>
<div class="a" style="left:305px;top:678px;width:1191px;height:1px;background:#e9e9e9;border-radius:0px;"></div>
<svg style="left:0;top:0" width="1" height="1"><rect x="304.9" y="712.9" width="14.1" height="14.1" rx="1.6" fill="#4d94ff"/><path d="M309.2 724.8 V716 H312.4 C314.200 716 315.100 717 315.100 718.400 C315.100 719.800 314.200 720.800 312.400 720.800 H309.200" fill="none" stroke="#fff" stroke-width="1.900"/></svg>
<div class="t" style="left:338.6px;top:713.40px;font-size:13px;color:#222;transform:scaleX(0.9668);transform-origin:0 0;">Parcheggio</div>
<div class="a" style="left:459px;top:704px;width:54px;height:32px;border:1px solid #444;border-radius:7px;background:#fff;"></div>
<svg style="left:0;top:0" width="1" height="1"><path d="M485.9 712.4V725.4M479.4 718.9H492.4" fill="none" stroke="#333" stroke-width="1.1"/></svg>
<svg style="left:0;top:0" width="1" height="1"><rect x="605" y="715.6" width="9.800" height="11.200" fill="#bfe0ff"/><path d="M604.800 716.200 C605.600 714.600 607.600 713.200 609.900 713 C612.200 713.200 614.200 714.600 615 716.200 V717 H604.800 Z" fill="#53a9ff"/><rect x="608.200" y="715" width="3.500" height="11.800" fill="#45a3ff"/><rect x="604.800" y="720.200" width="10.200" height="0.800" fill="#7dbfff"/><rect x="604.800" y="726" width="10.200" height="0.900" fill="#53a9ff"/><rect x="604.800" y="716" width="0.800" height="10.800" fill="#8cc6ff"/><rect x="614.200" y="716" width="0.800" height="10.800" fill="#8cc6ff"/></svg>
<div class="t" style="left:636.0px;top:713.40px;font-size:13px;color:#222;transform:scaleX(0.9611);transform-origin:0 0;">Cabina</div>
<div class="a" style="left:757px;top:704px;width:54px;height:32px;border:1px solid #444;border-radius:7px;background:#fff;"></div>
<svg style="left:0;top:0" width="1" height="1"><path d="M783.7 712.4V725.4M777.2 718.9H790.2" fill="none" stroke="#333" stroke-width="1.1"/></svg>
<svg style="left:0;top:0" width="1" height="1"><path d="M901.2 716.600 L903.800 720.400 H914.800 M904 720.600 L902.600 723.400 M913 720.600 L914.400 723.400" fill="none" stroke="#ff0000" stroke-width="1.500" stroke-linecap="round" stroke-linejoin="round"/></svg>
<div class="t" style="left:933.8px;top:713.40px;font-size:13px;color:#222;transform:scaleX(0.9359);transform-origin:0 0;">Extra</div>
<div class="a" style="left:1054px;top:704px;width:54px;height:32px;border:1px solid #444;border-radius:7px;background:#fff;"></div>
<svg style="left:0;top:0" width="1" height="1"><path d="M1081 712.4V725.4M1074.5 718.9H1087.5" fill="none" stroke="#333" stroke-width="1.1"/></svg>
<div class="t" style="left:602.9px;top:757.59px;font-size:11px;color:#666;transform:scaleX(0.9950);transform-origin:0 0;">Cabina 2 28/09 € 2</div>
<svg style="left:0;top:0" width="1" height="1"><circle cx="707.1" cy="763.6" r="7.8" fill="#fbbc05"/><circle cx="707.1" cy="763.6" r="6.199999999999999" fill="none" stroke="#c98a00" stroke-width="0.7"/><path d="M709.5 761.0 A3.4 3.4 0 1 0 709.5 766.2 M703.5 762.7H707.9 M703.5 764.5H707.5" fill="none" stroke="#5a3b00" stroke-width="0.9"/></svg>
<div class="a" style="left:299px;top:800px;width:1203px;height:1px;background:#e6e6e6;border-radius:0px;"></div>
<div class="t" style="left:299.2px;top:832.26px;font-size:16px;font-weight:bold;color:#111;transform:scaleX(0.9206);transform-origin:0 0;">Ticket d&#x27;ingresso</div>
<svg style="left:0;top:0" width="1" height="1"><path d="M311.79999999999995 878.615V871.8H318.61499999999995 M332.185 871.8H339.0V878.615 M339.0 892.185V899.0H332.185 M318.61499999999995 899.0H311.79999999999995V892.185" fill="none" stroke="#000" stroke-width="1.8" stroke-linecap="round" stroke-linejoin="round"/><rect x="316.24" y="876.24" width="6.57" height="6.57" rx="0.99" fill="none" stroke="#000" stroke-width="1.98"/><rect x="328.13" y="876.24" width="6.57" height="6.57" rx="0.99" fill="none" stroke="#000" stroke-width="1.98"/><rect x="316.24" y="888.13" width="6.57" height="6.57" rx="0.99" fill="none" stroke="#000" stroke-width="1.98"/><rect x="327.14" y="887.14" width="1.71" height="1.71" fill="#111"/><rect x="327.14" y="890.56" width="1.71" height="1.71" fill="#111"/><rect x="327.14" y="893.98" width="1.71" height="1.71" fill="#111"/><rect x="328.85" y="888.85" width="1.71" height="1.71" fill="#111"/><rect x="328.85" y="892.27" width="1.71" height="1.71" fill="#111"/><rect x="330.56" y="887.14" width="1.71" height="1.71" fill="#111"/><rect x="330.56" y="890.56" width="1.71" height="1.71" fill="#111"/><rect x="330.56" y="893.98" width="1.71" height="1.71" fill="#111"/><rect x="332.27" y="888.85" width="1.71" height="1.71" fill="#111"/><rect x="332.27" y="892.27" width="1.71" height="1.71" fill="#111"/><rect x="333.98" y="887.14" width="1.71" height="1.71" fill="#111"/><rect x="333.98" y="890.56" width="1.71" height="1.71" fill="#111"/><rect x="333.98" y="893.98" width="1.71" height="1.71" fill="#111"/></svg>
<div class="t" style="left:353.2px;top:879.40px;font-size:13px;font-weight:bold;color:#111;transform:scaleX(0.9065);transform-origin:0 0;">Ingressi</div>
<div class="a" style="left:432px;top:870px;width:57px;height:32px;border:1px solid #444;border-radius:7px;background:#fff;"></div>
<svg style="left:0;top:0" width="1" height="1"><path d="M460.6 878.9V891.9M454.1 885.4H467.1" fill="none" stroke="#333" stroke-width="1.1"/></svg>
<div class="a" style="left:1533px;top:69px;width:7px;height:513px;background:#c1c1c1;border-radius:0px;"></div>
<svg style="left:0;top:0" width="1" height="1"><path d="M1533.8 65.8 L1536.5 62.8 L1539.2 65.8 Z" fill="#c0c0c0"/><path d="M1533.8 903.3 L1536.5 906 L1539.2 903.3 Z" fill="#c0c0c0"/></svg>
<div class="a" style="left:1542px;top:72px;width:1px;height:825px;background:#e9e9e9;border-radius:0px;"></div>
<div class="a" style="left:1571px;top:72px;width:151px;height:37px;background:#666;border-radius:7px;"></div>
<svg style="left:0;top:0" width="1" height="1"><g fill="none" stroke="#fff" stroke-width="1.1" stroke-linecap="round" stroke-linejoin="round"><path d="M1619.4 86.4 H1631.4 M1623 86.200 V84.400 C1623 83.800 1623.400 83.400 1624 83.400 H1626.800 C1627.400 83.400 1627.800 83.800 1627.800 84.400 V86.200 M1620.600 86.600 L1621.400 95.800 C1621.500 96.600 1622 97 1622.800 97 H1628 C1628.800 97 1629.300 96.600 1629.400 95.800 L1630.200 86.600 M1623.400 88.800 V94.600 M1625.400 88.800 V94.600 M1627.400 88.800 V94.600"/></g></svg>
<div class="t" style="left:1638.4px;top:83.64px;font-size:12px;color:#fff;transform:scaleX(0.8892);transform-origin:0 0;-webkit-text-stroke:0.35px #fff;">Elimina</div>
<div class="a" style="left:1729px;top:72px;width:151px;height:37px;background:#5ea604;border-radius:7px;"></div>
<svg style="left:0;top:0" width="1" height="1"><path d="M1753 90.600 L1757.600 95.600 L1766 84.800" fill="none" stroke="#fff" stroke-width="1.4" stroke-linecap="round" stroke-linejoin="round" /></svg>
<div class="t" style="left:1773.2px;top:83.64px;font-size:12px;color:#fff;transform:scaleX(0.8975);transform-origin:0 0;-webkit-text-stroke:0.35px #fff;">Chiudi schermata</div>
<div class="a" style="left:1911px;top:69px;width:7px;height:692px;background:#c1c1c1;border-radius:0px;"></div>
<svg style="left:0;top:0" width="1" height="1"><path d="M1911.8 65.8 L1914.5 62.8 L1917.2 65.8 Z" fill="#c0c0c0"/><path d="M1911.8 903.3 L1914.5 906 L1917.2 903.3 Z" fill="#c0c0c0"/></svg>
<div class="a" style="left:1544px;top:132px;width:370px;height:430px;border:3px solid #ff0000;border-radius:0px;background:transparent;"></div>
<div class="t" style="left:1571.0px;top:153.75px;font-size:14px;font-weight:bold;color:#111;transform:scaleX(0.9486);transform-origin:0 0;">Riepilogo</div>
<div class="a" style="left:1638.6px;top:152px;width:81.40000000000009px;height:17.80000000000001px;background:#d9000d;border-radius:9px;"></div>
<svg style="left:0;top:0" width="1" height="1"><path d="M1646.4 157 L1652.400 163 M1652.400 157 L1646.400 163" fill="none" stroke="#fff" stroke-width="1.3" stroke-linecap="round" stroke-linejoin="round" /></svg>
<div class="t" style="left:1657.4px;top:155.29px;font-size:11px;font-weight:bold;color:#fff;transform:scaleX(0.9223);transform-origin:0 0;">Non pagato</div>
<div class="a" style="left:1571px;top:177px;width:309px;height:1px;background:#e6e6e6;border-radius:0px;"></div>
<div class="t" style="left:1571.0px;top:195.20px;font-size:13px;color:#222;transform:scaleX(0.9648);transform-origin:0 0;">Voucher hotel:</div>
<div class="a" style="left:1800px;top:185px;width:80px;height:33px;border:1px solid #cfd4da;border-radius:7px;background:#fff"></div>
<div class="a" style="left:1800px;top:185px;width:37.5px;height:33px;border-radius:7px 0 0 7px;background:#40adff"></div>
<div class="t" style="left:1813.6px;top:195.40px;font-size:13px;color:#fff;transform:scaleX(0.8620);transform-origin:0 0;">Sì</div>
<div class="t" style="left:1851.2px;top:195.40px;font-size:13px;color:#333;transform:scaleX(0.9023);transform-origin:0 0;">No</div>
<div class="a" style="left:1571px;top:225px;width:309px;height:1px;background:#e6e6e6;border-radius:0px;"></div>
<div class="t" style="left:1571.0px;top:234.80px;font-size:13px;color:#222;transform:scaleX(0.9554);transform-origin:0 0;">Spiaggia:</div>
<div class="t" style="left:1846.8px;top:234.80px;font-size:13px;color:#111;transform:scaleX(0.9072);transform-origin:0 0;">0,00 €</div>
<div class="t" style="left:1571.0px;top:269.50px;font-size:13px;color:#222;transform:scaleX(0.9703);transform-origin:0 0;">Spiaggia applicato:</div>
<div class="a" style="left:1815px;top:261px;width:72px;height:31px;border:1px solid #a6a6a6;border-radius:7px;background:#fff;"></div>
<div class="t" style="left:1846.3px;top:269.40px;font-size:13px;color:#a3a5ad;transform:scaleX(0.9099);transform-origin:0 0;">0,00 €</div>
<div class="t" style="left:1571.0px;top:303.20px;font-size:13px;color:#222;transform:scaleX(0.9511);transform-origin:0 0;">Pezzi extra:</div>
<div class="t" style="left:1846.8px;top:303.20px;font-size:13px;color:#111;transform:scaleX(0.9072);transform-origin:0 0;">2,00 €</div>
<div class="t" style="left:1571.0px;top:330.40px;font-size:13px;color:#222;transform:scaleX(0.9476);transform-origin:0 0;">Servizi extra:</div>
<div class="t" style="left:1846.8px;top:330.40px;font-size:13px;color:#111;transform:scaleX(0.9072);transform-origin:0 0;">0,00 €</div>
<div class="a" style="left:1571px;top:352px;width:309px;height:1px;background:#e6e6e6;border-radius:0px;"></div>
<div class="t" style="left:1571.0px;top:370.40px;font-size:13px;font-weight:bold;color:#111;transform:scaleX(0.9170);transform-origin:0 0;">Totale:</div>
<div class="a" style="left:1815px;top:361px;width:72px;height:31.5px;border:1px solid #a6a6a6;border-radius:7px;background:#fff;"></div>
<div class="t" style="left:1846.3px;top:370.30px;font-size:13px;color:#a3a5ad;transform:scaleX(0.9099);transform-origin:0 0;">2,00 €</div>
<div class="t" style="left:1571.0px;top:403.40px;font-size:13px;color:#222;transform:scaleX(0.9637);transform-origin:0 0;">Pagato:</div>
<div class="t" style="left:1846.8px;top:403.40px;font-size:13px;color:#111;transform:scaleX(0.9072);transform-origin:0 0;">0,00 €</div>
<div class="t" style="left:1571.0px;top:429.70px;font-size:13px;color:#222;transform:scaleX(0.9456);transform-origin:0 0;">Rimanenza:</div>
<div class="t" style="left:1846.8px;top:429.70px;font-size:13px;color:#111;transform:scaleX(0.9072);transform-origin:0 0;">2,00 €</div>
<div class="a" style="left:1571px;top:453px;width:309px;height:1px;background:#e6e6e6;border-radius:0px;"></div>
<div class="t" style="left:1571.0px;top:470.70px;font-size:13px;color:#222;letter-spacing:0.110px;">Acconti/storni:</div>
<div class="a" style="left:1808px;top:461px;width:72px;height:33px;border:1px solid #a6a6a6;border-radius:7px;background:#fff;"></div>
<div class="t" style="left:1571.0px;top:511.80px;font-size:13px;color:#222;transform:scaleX(0.9642);transform-origin:0 0;">Pagamento:</div>
<div class="a" style="left:1736px;top:503px;width:144px;height:32px;border:1px solid #a6a6a6;border-radius:7px;background:#fff;"></div>
<div class="t" style="left:1744.0px;top:511.70px;font-size:13px;color:#333;transform:scaleX(0.9624);transform-origin:0 0;">Contanti</div>
<svg style="left:0;top:0" width="1" height="1"><path d="M1859.1 513.75 L1864.6 519.25 L1870.1 513.75" fill="none" stroke="#333" stroke-width="1.3" stroke-linecap="round" stroke-linejoin="round"/></svg>
<div class="a" style="left:1571px;top:549px;width:309px;height:1px;background:#e6e6e6;border-radius:0px;"></div>
<div class="a" style="left:1571px;top:565px;width:309px;height:46px;border:1px solid #a6a6a6;border-radius:8px;background:#fff;"></div>
<svg style="left:0;top:0" width="1" height="1"><rect x="1674.0" y="577.7" width="16" height="19.600" rx="2.400" fill="none" stroke="#111" stroke-width="1.500"/><rect x="1677.5" y="581.2" width="9" height="4.200" fill="none" stroke="#111" stroke-width="1.400"/><rect x="1677.5" y="588.6" width="1.600" height="1.600" fill="#111"/><rect x="1681.1" y="588.6" width="1.600" height="1.600" fill="#111"/><rect x="1684.7" y="588.6" width="1.600" height="1.600" fill="#111"/><rect x="1677.5" y="592.2" width="1.600" height="1.600" fill="#111"/><rect x="1681.1" y="592.2" width="1.600" height="1.600" fill="#111"/><rect x="1684.7" y="592.2" width="1.600" height="1.600" fill="#111"/></svg>
<div class="t" style="left:1701.0px;top:581.00px;font-size:13px;color:#222;transform:scaleX(0.9267);transform-origin:0 0;">Paga con POS</div>
<div class="a" style="left:1571px;top:619px;width:309px;height:46px;border:1px solid #a6a6a6;border-radius:8px;background:#fff;"></div>
<svg style="left:0;top:0" width="1" height="1"><rect x="1700.9" y="631.7" width="16" height="19.600" rx="2.400" fill="none" stroke="#111" stroke-width="1.500"/><rect x="1704.4" y="635.2" width="9" height="4.200" fill="none" stroke="#111" stroke-width="1.400"/><rect x="1704.4" y="642.6" width="1.600" height="1.600" fill="#111"/><rect x="1708.0" y="642.6" width="1.600" height="1.600" fill="#111"/><rect x="1711.6000000000001" y="642.6" width="1.600" height="1.600" fill="#111"/><rect x="1704.4" y="646.2" width="1.600" height="1.600" fill="#111"/><rect x="1708.0" y="646.2" width="1.600" height="1.600" fill="#111"/><rect x="1711.6000000000001" y="646.2" width="1.600" height="1.600" fill="#111"/></svg>
<div class="t" style="left:1727.5px;top:635.30px;font-size:13px;color:#222;transform:scaleX(0.8878);transform-origin:0 0;">SIAE</div>
<div class="a" style="left:1572px;top:674px;width:70px;height:105px;background:#40adff;border-radius:8px;"></div>
<div class="a" style="left:1650px;top:673px;width:72px;height:107px;border:1px solid #a6a6a6;border-radius:8px;background:#fff;"></div>
<div class="a" style="left:1729px;top:673px;width:72px;height:107px;border:1px solid #a6a6a6;border-radius:8px;background:#fff;"></div>
<div class="a" style="left:1808px;top:673px;width:72px;height:107px;border:1px solid #a6a6a6;border-radius:8px;background:#fff;"></div>
<svg style="left:0;top:0" width="1" height="1"><path d="M1600.445 694.46 V687.9562500000001 H1613.755 V694.46 M1600.445 705.35 H1598.3275 C1596.815 705.35 1595.9075 704.4425 1595.9075 702.9300000000001 V696.88 C1595.9075 695.3675000000001 1596.815 694.46 1598.3275 694.46 H1615.8725 C1617.385 694.46 1618.2925 695.3675000000001 1618.2925 696.88 V702.9300000000001 C1618.2925 704.4425 1617.385 705.35 1615.8725 705.35 H1613.755 M1600.445 700.0562500000001 H1613.755 V710.3412500000001 H1600.445 Z" fill="none" stroke="#fff" stroke-width="2.0" stroke-linecap="round" stroke-linejoin="round" /></svg>
<svg style="left:0;top:0" width="1" height="1"><path d="M1679.445 694.46 V687.9562500000001 H1692.755 V694.46 M1679.445 705.35 H1677.3275 C1675.815 705.35 1674.9075 704.4425 1674.9075 702.9300000000001 V696.88 C1674.9075 695.3675000000001 1675.815 694.46 1677.3275 694.46 H1694.8725 C1696.385 694.46 1697.2925 695.3675000000001 1697.2925 696.88 V702.9300000000001 C1697.2925 704.4425 1696.385 705.35 1694.8725 705.35 H1692.755 M1679.445 700.0562500000001 H1692.755 V710.3412500000001 H1679.445 Z" fill="none" stroke="#111" stroke-width="2.0" stroke-linecap="round" stroke-linejoin="round" /></svg>
<svg style="left:0;top:0" width="1" height="1"><path d="M1776.5 691.5 A11.2 10.9 0 1 0 1776.5 706.900 M1753 696.700 H1773.300 M1753 701.700 H1772.500" fill="none" stroke="#111" stroke-width="1.5" stroke-linecap="round" stroke-linejoin="round" stroke-linecap="butt"/></svg>
<svg style="left:0;top:0" width="1" height="1"><path d="M1836.3 690.2 H1852 V707.700 H1836.300 Z M1840.200 696.700 H1848.200 M1840.200 701.700 H1848.200" fill="none" stroke="#111" stroke-width="2.0" stroke-linecap="round" stroke-linejoin="round" stroke-linejoin="miter" stroke-linecap="butt"/></svg>
<div class="t" style="left:1588.8px;top:721.19px;font-size:11px;font-weight:bold;color:#fff;transform:scaleX(0.9233);transform-origin:0 0;">Stampa</div>
<div class="t" style="left:1591.3px;top:736.19px;font-size:11px;font-weight:bold;color:#fff;transform:scaleX(0.9314);transform-origin:0 0;">fiscale</div>
<div class="t" style="left:1667.5px;top:721.19px;font-size:11px;font-weight:bold;color:#111;transform:scaleX(0.9283);transform-origin:0 0;">Stampa</div>
<div class="t" style="left:1664.7px;top:736.19px;font-size:11px;font-weight:bold;color:#111;transform:scaleX(0.9137);transform-origin:0 0;">preconto</div>
<div class="t" style="left:1752.8px;top:721.19px;font-size:11px;font-weight:bold;color:#111;transform:scaleX(0.9279);transform-origin:0 0;">Paga</div>
<div class="t" style="left:1750.8px;top:736.19px;font-size:11px;font-weight:bold;color:#111;transform:scaleX(0.9353);transform-origin:0 0;">senza</div>
<div class="t" style="left:1747.0px;top:751.19px;font-size:11px;font-weight:bold;color:#111;transform:scaleX(0.9395);transform-origin:0 0;">stampa</div>
<div class="t" style="left:1819.5px;top:721.19px;font-size:11px;font-weight:bold;color:#111;transform:scaleX(0.9068);transform-origin:0 0;">Emissione</div>
<div class="t" style="left:1828.0px;top:736.19px;font-size:11px;font-weight:bold;color:#111;transform:scaleX(0.9493);transform-origin:0 0;">fattura</div>
<div class="t" style="left:1571.2px;top:795.80px;font-size:13px;color:#222;transform:scaleX(0.9685);transform-origin:0 0;">Cronologia pagamenti</div>
<svg style="left:0;top:0" width="1" height="1"><path d="M1700.25 800.1 L1704 803.9 L1707.75 800.1" fill="none" stroke="#222" stroke-width="1.7" stroke-linecap="round" stroke-linejoin="round"/></svg>
<div class="t" style="left:1571.2px;top:827.80px;font-size:13px;color:#222;transform:scaleX(0.9685);transform-origin:0 0;">Note del cliente</div>
<div class="a" style="left:1571px;top:851px;width:309px;height:79px;border:1px solid #a6a6a6;border-radius:8px;background:#fff;"></div>
</body></html>
